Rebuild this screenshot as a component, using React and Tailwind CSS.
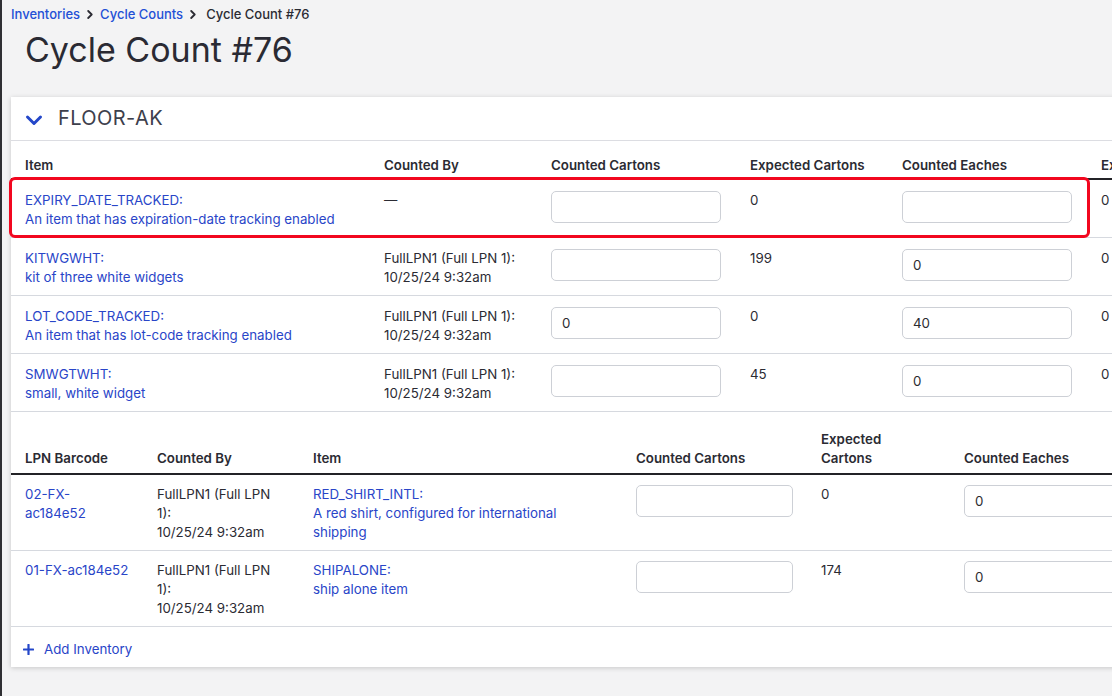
import React from 'react';

const itemRows = [
  { sku: 'EXPIRY_DATE_TRACKED:', desc: 'An item that has expiration-date tracking enabled', countedBy: null, cartons: '', expCartons: '0', eaches: '', expEaches: '0', flagged: true },
  { sku: 'KITWGWHT:', desc: 'kit of three white widgets', countedBy: true, cartons: '', expCartons: '199', eaches: '0', expEaches: '0' },
  { sku: 'LOT_CODE_TRACKED:', desc: 'An item that has lot-code tracking enabled', countedBy: true, cartons: '0', expCartons: '0', eaches: '40', expEaches: '0' },
  { sku: 'SMWGTWHT:', desc: 'small, white widget', countedBy: true, cartons: '', expCartons: '45', eaches: '0', expEaches: '0' },
];

const lpnRows = [
  { barcode: ['02-FX-', 'ac184e52'], sku: 'RED_SHIRT_INTL:', desc: ['A red shirt, configured for international', 'shipping'], expCartons: '0', eaches: '0' },
  { barcode: ['01-FX-ac184e52'], sku: 'SHIPALONE:', desc: ['ship alone item'], expCartons: '174', eaches: '0' },
];

function CountInput({ value, width }) {
  return (
    <input
      type="text"
      defaultValue={value}
      className={`h-[32px] ${width} rounded-[5px] border border-[#cdd0d6] bg-white px-[10px] text-[13.3px] text-[#2b2b30] outline-none`}
    />
  );
}

function Chevron() {
  return (
    <svg width="6" height="9" viewBox="0 0 6 9" fill="none" className="shrink-0">
      <path d="M1.2 1l3.5 3.5L1.2 8" stroke="#2b2b33" strokeWidth="1.8" strokeLinecap="round" strokeLinejoin="round" />
    </svg>
  );
}

export default function App() {
  const head1 = 'grid grid-cols-[359px_167px_199px_152px_199px_1fr]';
  const head2 = 'grid grid-cols-[132px_156px_323px_185px_143px_1fr]';

  return (
    <div className="h-screen overflow-hidden border-l-2 border-[#2f2f33] bg-[#f3f3f4] font-[Inter,sans-serif] text-[13.3px] leading-[19px] text-[#2b2b33]">
      {/* breadcrumb */}
      <nav className="flex items-center gap-[7px] pl-[9px] pt-[5px] text-[13px] font-medium leading-[18px]">
        <span className="text-[#2350d6]">Inventories</span>
        <Chevron />
        <span className="text-[#2350d6]">Cycle Counts</span>
        <Chevron />
        <span className="ml-[3px] text-[#2b2b33]">Cycle Count #76</span>
      </nav>

      <h1 className="mt-[7px] pl-[23px] text-[34px] font-normal leading-[40px] text-[#2a2a33]">Cycle Count #76</h1>

      <div className="ml-[9px] mt-[27px] w-[1200px] bg-white shadow-[0_1px_5px_rgba(0,0,0,0.18)]">
        {/* location header */}
        <div className="flex h-[44px] items-center gap-[14px] border-b border-[#dcdde2] pl-[13px]">
          <svg width="20" height="20" viewBox="0 0 20 20" fill="none" className="mt-[2px]">
            <path d="M3.5 7l6.5 6.5L16.5 7" stroke="#2447c9" strokeWidth="3" strokeLinecap="round" strokeLinejoin="round" />
          </svg>
          <span className="text-[20px] font-normal tracking-[0.4px] text-[#3d404c]">FLOOR-AK</span>
        </div>

        {/* items table */}
        <div className={`${head1} h-[39px] items-end border-b-2 border-[#232327] pb-[3px] font-semibold`}>
          <div className="pl-[14px]">Item</div>
          <div className="pl-[14px]">Counted By</div>
          <div className="pl-[14px]">Counted Cartons</div>
          <div className="pl-[14px]">Expected Cartons</div>
          <div className="pl-[14px]">Counted Eaches</div>
          <div className="whitespace-nowrap pl-[14px]">Expected Eaches</div>
        </div>
        {itemRows.map((row) => (
          <div key={row.sku} className={`${head1} relative border-b border-[#d6d9df] pb-[8px] pt-[11px]`}>
            <div className="pl-[14px] text-[#2945c8]">
              <div>{row.sku}</div>
              <div>{row.desc}</div>
            </div>
            <div className="pl-[14px]">
              {row.countedBy ? (
                <>
                  <div>FullLPN1 (Full LPN 1):</div>
                  <div>10/25/24 9:32am</div>
                </>
              ) : (
                <div>—</div>
              )}
            </div>
            <div className="pl-[14px]"><CountInput value={row.cartons} width="w-[170px]" /></div>
            <div className="pl-[14px]">{row.expCartons}</div>
            <div className="pl-[14px]"><CountInput value={row.eaches} width="w-[170px]" /></div>
            <div className="pl-[14px]">{row.expEaches}</div>
            {row.flagged && (
              <div className="pointer-events-none absolute bottom-[-1px] left-[-2px] top-[-3px] w-[1081px] rounded-[6px] border-[3px] border-[#f2071f]" />
            )}
          </div>
        ))}

        {/* lpn table */}
        <div className={`${head2} h-[63px] items-end border-b-2 border-[#232327] pb-[5px] font-semibold`}>
          <div className="pl-[14px]">LPN Barcode</div>
          <div className="pl-[14px]">Counted By</div>
          <div className="pl-[14px]">Item</div>
          <div className="pl-[14px]">Counted Cartons</div>
          <div className="pl-[14px]">
            <div>Expected</div>
            <div>Cartons</div>
          </div>
          <div className="pl-[14px]">Counted Eaches</div>
        </div>
        {lpnRows.map((row) => (
          <div key={row.sku} className={`${head2} border-b border-[#d6d9df] pb-[8px] pt-[10px]`}>
            <div className="pl-[14px] text-[#2945c8]">
              {row.barcode.map((part) => <div key={part}>{part}</div>)}
            </div>
            <div className="pl-[14px]">
              <div>FullLPN1 (Full LPN</div>
              <div>1):</div>
              <div>10/25/24 9:32am</div>
            </div>
            <div className="pl-[14px] text-[#2945c8]">
              <div>{row.sku}</div>
              {row.desc.map((line) => <div key={line}>{line}</div>)}
            </div>
            <div className="pl-[14px]"><CountInput value="" width="w-[157px]" /></div>
            <div className="pl-[14px]">{row.expCartons}</div>
            <div className="pl-[14px]"><CountInput value={row.eaches} width="w-[157px]" /></div>
          </div>
        ))}

        <div className="flex items-center gap-[10px] pb-[8px] pl-[12px] pt-[13px] text-[#2945c8]">
          <svg width="11" height="11" viewBox="0 0 11 11" fill="none">
            <path d="M5.5 0.8v9.4M0.8 5.5h9.4" stroke="#2447c9" strokeWidth="2.2" strokeLinecap="round" />
          </svg>
          <span>Add Inventory</span>
        </div>
      </div>
    </div>
  );
}
